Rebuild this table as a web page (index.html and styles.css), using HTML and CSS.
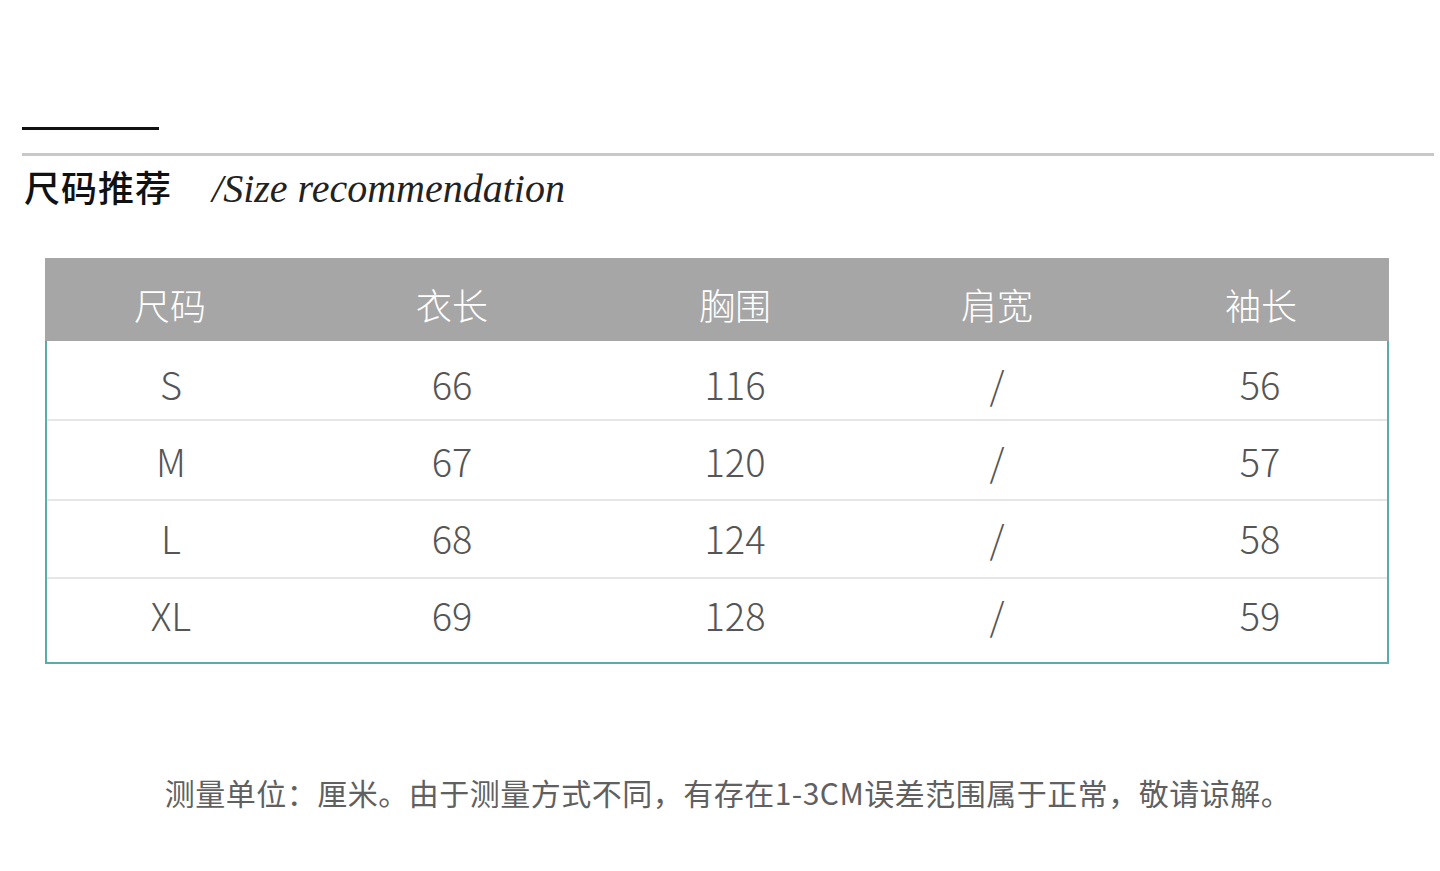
FILE: index.html
```html
<!DOCTYPE html>
<html lang="zh">
<head>
<meta charset="utf-8">
<title>尺码推荐</title>
<link rel="stylesheet" href="styles.css">
</head>
<body>
<div class="page">
  <div class="rule-black"></div>
  <div class="rule-gray"></div>
  <div class="title">
    <span class="title-cn">尺码推荐</span>
    <span class="title-en">/Size recommendation</span>
  </div>
  <div class="table">
    <div class="row head">
      <div class="cell">尺码</div><div class="cell">衣长</div><div class="cell">胸围</div><div class="cell">肩宽</div><div class="cell">袖长</div>
    </div>
    <div class="body">
      <div class="row r1"><div class="cell">S</div><div class="cell">66</div><div class="cell">116</div><div class="cell">/</div><div class="cell">56</div></div>
      <div class="row r2"><div class="cell">M</div><div class="cell">67</div><div class="cell">120</div><div class="cell">/</div><div class="cell">57</div></div>
      <div class="row r3"><div class="cell">L</div><div class="cell">68</div><div class="cell">124</div><div class="cell">/</div><div class="cell">58</div></div>
      <div class="row r4"><div class="cell">XL</div><div class="cell">69</div><div class="cell">128</div><div class="cell">/</div><div class="cell">59</div></div>
    </div>
  </div>
  <p class="note">测量单位：厘米。由于测量方式不同，有存在1-3CM误差范围属于正常，敬请谅解。</p>
</div>
</body>
</html>
```
FILE: styles.css
```css
html, body {
  margin: 0;
  padding: 0;
  background: #ffffff;
}
.page {
  width: 1440px;
  height: 871px;
  overflow: hidden;
  padding-top: 127px;
  box-sizing: border-box;
  font-family: "Noto Sans CJK SC", "Noto Sans", sans-serif;
}
.rule-black {
  margin-left: 22px;
  width: 137px;
  height: 3px;
  background: #111111;
}
.rule-gray {
  margin-left: 22px;
  margin-top: 23px;
  width: 1412px;
  height: 3px;
  background: #c8c8c8;
}
.title {
  display: flex;
  align-items: baseline;
  margin: 4px 0 0 24px;
  height: 56px;
}
.title-cn {
  font-family: "Noto Sans CJK SC", sans-serif;
  font-weight: 500;
  font-size: 36px;
  color: #111111;
  letter-spacing: 1px;
}
.title-en {
  font-family: "Liberation Serif", serif;
  font-style: italic;
  font-size: 40px;
  color: #222222;
  margin-left: 40px;
}
.table {
  margin: 42px 0 0 45px;
  width: 1344px;
}
.row {
  display: grid;
  grid-template-columns: 248px 314px 252px 272px 1fr;
}
.head {
  grid-template-columns: 250px 314px 252px 272px 1fr;
}
.cell {
  display: flex;
  align-items: center;
  justify-content: center;
}
.head {
  background: #a6a6a6;
  height: 83px;
  color: #ffffff;
  font-size: 36px;
  font-weight: 300;
  padding-top: 8px;
  box-sizing: border-box;
}
.body {
  border: 2px solid #5aabab;
  border-top: none;
}
.body .row {
  color: #555555;
  font-size: 38px;
  font-weight: 300;
  font-family: "Noto Sans CJK SC", "Noto Sans", sans-serif;
  border-bottom: 2px solid #e6e6e6;
  box-sizing: border-box;
}
.body .row.r4 {
  border-bottom: none;
}
.r1 { height: 80px; padding-top: 6px; }
.r2 { height: 80px; padding-top: 0; }
.r3 { height: 78px; padding-bottom: 4px; }
.r4 { height: 83px; padding-bottom: 12px; }
.note {
  margin: 106px 0 0 0;
  padding-left: 16px;
  text-align: center;
  font-size: 30px;
  letter-spacing: 0.5px;
  color: #606060;
  font-family: "Noto Sans CJK SC", sans-serif;
  font-weight: 400;
}
```
